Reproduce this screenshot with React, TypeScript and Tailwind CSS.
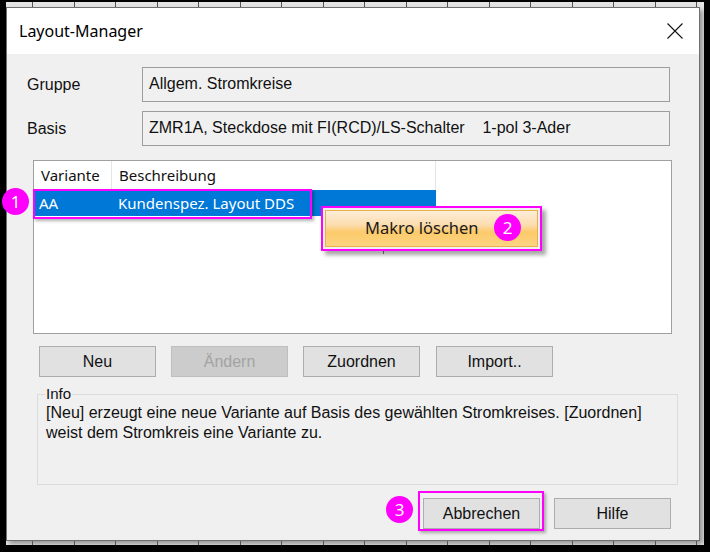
import { ReactNode } from "react";

const ui = "font-['Liberation_Sans',Arial,sans-serif]";
const segoe = "font-['Noto_Sans','Open_Sans',sans-serif]";

type TBadgeProps = {
  n: number;
  className: string;
};

function Badge({ n, className }: TBadgeProps) {
  return (
    <div
      className={`absolute w-[27px] h-[27px] rounded-full bg-[#ff00ff] text-white flex items-center justify-center text-[17px] leading-none ${segoe} ${className}`}
    >
      {n}
    </div>
  );
}

type TButtonProps = {
  children: ReactNode;
  disabled?: boolean;
  className?: string;
};

function DlgButton({ children, disabled, className = "" }: TButtonProps) {
  return (
    <div
      className={`w-[117px] h-[31px] flex items-center justify-center text-[16px] border ${
        disabled
          ? "bg-[#cccccc] border-[#bfbfbf] text-[#a3a3a3]"
          : "bg-[#e1e1e1] border-[#adadad] text-[#111]"
      } ${className}`}
    >
      {children}
    </div>
  );
}

function Field({ label, value }: { label: string; value: string }) {
  return (
    <div className="flex items-center">
      <div className="w-[115px] text-[16px] text-[#111]">{label}</div>
      <div className="w-[528px] h-[35px] border border-[#9d9d9d] bg-[#f0f0f0] pl-[6px] pt-[4px] text-[16px] text-[#111] whitespace-pre">
        {value}
      </div>
    </div>
  );
}

export default function App() {
  return (
    <div className={`relative w-[710px] h-[552px] bg-black pt-[2px] pl-[6px] ${ui}`}>
      <div className="w-[698px] h-[543px] bg-[#e4e4e4] flex flex-col">
        {/* ruler ticks above the dialog */}
        <div className="h-[5px] bg-[repeating-linear-gradient(90deg,transparent_0_26px,#555_26px_27px,transparent_27px_41.5px)]" />

        <div className="w-[694px] h-[534px] border border-[#707070] bg-[#f0f0f0] shadow-[3px_3px_5px_rgba(0,0,0,0.35)] flex flex-col">
          <div className="h-[46px] bg-white flex items-center justify-between pl-[12px] pr-[16px]">
            <span className={`text-[16px] text-black ${segoe}`}>Layout-Manager</span>
            <svg width="16" height="16" viewBox="0 0 16 16">
              <path d="M0.5 0.5 L15.5 15.5 M15.5 0.5 L0.5 15.5" stroke="#111" strokeWidth="1.1" />
            </svg>
          </div>

          <div className="flex flex-col pl-[20px]">
            <div className="mt-[13px]">
              <Field label="Gruppe" value="Allgem. Stromkreise" />
            </div>
            <div className="mt-[9px]">
              <Field label="Basis" value="ZMR1A, Steckdose mit FI(RCD)/LS-Schalter    1-pol 3-Ader" />
            </div>
          </div>

          {/* list view */}
          <div className={`relative ml-[26px] mt-[14px] w-[639px] h-[174px] border border-[#a0a0a0] bg-white ${segoe}`}>
            <div className="flex h-[29px] text-[15px] text-[#111]">
              <div className="w-[78px] pl-[7px] flex items-center border-r border-[#e5e5e5]">Variante</div>
              <div className="w-[324px] pl-[7px] flex items-center border-r border-[#e5e5e5]">Beschreibung</div>
            </div>
            <div className="flex h-[26px] w-[402px] bg-[#0078d7] text-white text-[15px]">
              <div className="w-[78px] pl-[5px] flex items-center">AA</div>
              <div className="pl-[6px] flex items-center">Kundenspez. Layout DDS</div>
            </div>
            <div className="absolute left-[-1px] top-[28px] w-[279px] h-[30px] border-2 border-[#ff00ff] shadow-[2px_2px_3px_rgba(0,0,0,0.3)]" />
          </div>

          <div className="flex ml-[32px] mt-[12px]">
            <DlgButton>Neu</DlgButton>
            <DlgButton disabled className="ml-[15px]">Ändern</DlgButton>
            <DlgButton className="ml-[15px]">Zuordnen</DlgButton>
            <DlgButton className="ml-[16px]">Import..</DlgButton>
          </div>

          {/* Info group */}
          <div className="relative ml-[30px] mt-[17px] w-[641px] h-[91px] border border-[#dcdcdc] pl-[8px] pt-[8px] text-[16px] leading-[20px] text-[#111]">
            <span className="absolute left-[7px] top-[-11px] bg-[#f0f0f0] px-[1px] text-[15px] leading-[20px]">Info</span>
            <p>[Neu] erzeugt eine neue Variante auf Basis des gewählten Stromkreises. [Zuordnen]</p>
            <p>weist dem Stromkreis eine Variante zu.</p>
          </div>

          <div className="flex justify-end mt-[13px] pr-[28px]">
            <DlgButton>Abbrechen</DlgButton>
            <DlgButton className="ml-[14px]">Hilfe</DlgButton>
          </div>
        </div>

        {/* ruler ticks below the dialog */}
        <div className="h-[4px] bg-[repeating-linear-gradient(90deg,transparent_0_26px,#555_26px_27px,transparent_27px_41.5px)]" />
      </div>

      {/* context menu */}
      <div className="absolute left-[321px] top-[206px] w-[221px] h-[45px] border-2 border-[#ff00ff] bg-[#f0f0f0] p-[2px] shadow-[4px_4px_4px_rgba(0,0,0,0.35)]">
        <div className={`h-full border border-[#e8b04c] bg-[linear-gradient(180deg,#fdeed8_0%,#fbdcae_40%,#fcca6a_60%,#fdd482_100%)] flex items-center pl-[39px] text-[16.5px] text-[#1a1a1a] ${segoe}`}>
          Makro löschen
        </div>
      </div>
      <div className="absolute left-[383px] top-[251px] w-px h-[3px] bg-[#555]" />

      {/* highlight on Abbrechen */}
      <div className="absolute left-[418px] top-[491px] w-[126px] h-[40px] border-2 border-[#ff00ff] shadow-[2px_2px_3px_rgba(0,0,0,0.3)]" />

      <Badge n={1} className="left-[2px] top-[188px]" />
      <Badge n={2} className="left-[494px] top-[214px]" />
      <Badge n={3} className="left-[386px] top-[496px]" />
    </div>
  );
}
